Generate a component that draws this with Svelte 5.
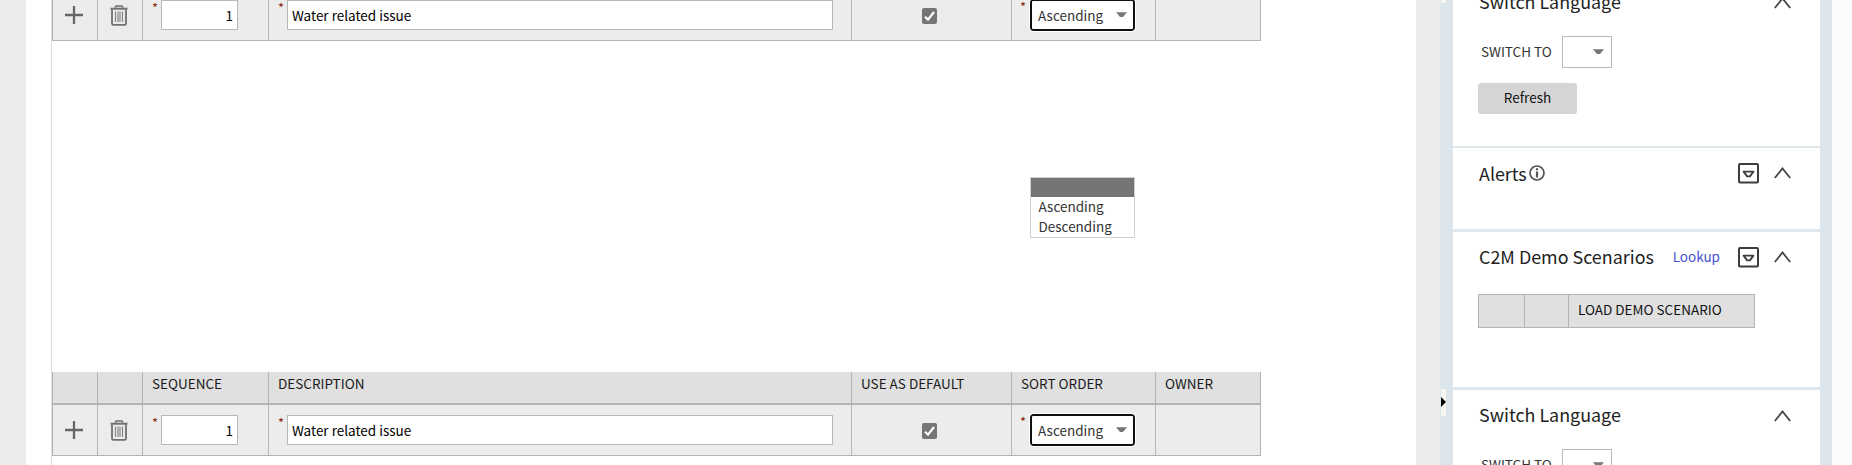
<script>
  const heads = ['', '', 'SEQUENCE', 'DESCRIPTION', 'USE AS DEFAULT', 'SORT ORDER', 'OWNER'];
</script>

{#snippet row()}
  <div class="grid row">
    <div class="icon-cell">
      <svg width="18" height="18" viewBox="0 0 18 18"><path d="M9 0V18M0 9H18" stroke="#666" stroke-width="2.3" /></svg>
    </div>
    <div class="icon-cell trash">
      <svg width="18" height="21" viewBox="0 0 18 21" fill="none" stroke="#707070">
        <path d="M5.5 2.8V1.5Q5.5 1 6.2 1H11.8Q12.5 1 12.5 1.5V2.8" stroke-width="1.4" />
        <path d="M.5 3.7H17.5" stroke-width="2" />
        <path d="M2 4.5V18.5Q2 19.8 3.3 19.8H14.7Q16 19.8 16 18.5V4.5" stroke-width="1.8" />
        <path d="M5.5 6.5V17M8 6.5V17M10 6.5V17M12.5 6.5V17" stroke-width="1.2" stroke="#858585" />
      </svg>
    </div>
    <div class="field"><span class="star">*</span><div class="input num">1</div></div>
    <div class="field"><span class="star">*</span><div class="input desc">Water related issue</div></div>
    <div class="check">
      <svg width="15" height="16" viewBox="0 0 15 16"><rect width="15" height="16" rx="2" fill="#757575" /><path d="M3 8.7L6 11.6L12 4" fill="none" stroke="#fff" stroke-width="2.2" /></svg>
    </div>
    <div class="field sort"><span class="star">*</span><div class="select"><span>Ascending</span>{@render caret()}</div></div>
    <div></div>
  </div>
{/snippet}

{#snippet caret()}
  <svg width="11" height="6" viewBox="0 0 11 6"><path d="M0 .3H11L7 5H4Z" fill="#777" /></svg>
{/snippet}

{#snippet chevron()}
  <svg width="17" height="12" viewBox="0 0 17 12"><path d="M.8 11L8.5 1.5L16.2 11" fill="none" stroke="#444" stroke-width="1.8" /></svg>
{/snippet}

{#snippet boxIcon()}
  <svg class="box" width="21" height="21" viewBox="0 0 21 21" fill="none" stroke="#3c3c3c">
    <rect x="1" y="1" width="19" height="18.6" rx="1" stroke-width="2" />
    <path d="M5.6 8.6H15.4L11.9 13.4H9.1Z" stroke-width="1.8" stroke-linejoin="round" />
  </svg>
{/snippet}

{#snippet language()}
  <section class="language">
    <header><h2>Switch Language</h2><span class="grow"></span>{@render chevron()}</header>
    <div class="switch"><span class="switch-label">SWITCH TO</span><div class="lang">{@render caret()}</div></div>
    <button>Refresh</button>
  </section>
{/snippet}

<div class="page">
  <main>
    <div class="sheet">
      <div class="first">{@render row()}</div>
      <div class="options">
        <div class="option active"></div>
        <div class="option">Ascending</div>
        <div class="option">Descending</div>
      </div>
      <div class="second">
        <div class="grid head">{#each heads as h}<div>{h}</div>{/each}</div>
        {@render row()}
      </div>
    </div>
  </main>
  <div class="gutter"></div>
  <div class="rail">
    <div class="handle short"></div>
    <div class="handle"><svg width="5" height="10" viewBox="0 0 5 10"><path d="M0 0L5 5L0 10Z" fill="#000" /></svg></div>
  </div>
  <aside>
    <div class="lift">{@render language()}</div>
    <section class="alerts">
      <header>
        <h2>Alerts</h2>
        <svg class="info" width="16" height="16" viewBox="0 0 16 16" fill="none" stroke="#555"><circle cx="8" cy="8" r="7" stroke-width="1.7" /><path d="M8 3.2V5.2M8 6.5V12.6" stroke-width="2.2" /></svg>
        <span class="grow"></span>{@render boxIcon()}{@render chevron()}
      </header>
    </section>
    <section class="demo">
      <header>
        <h2>C2M Demo Scenarios</h2><span class="grow"></span>
        <span class="link">Lookup</span>{@render boxIcon()}{@render chevron()}
      </header>
      <div class="load"><div></div><div></div><div>LOAD DEMO SCENARIO</div></div>
    </section>
    {@render language()}
  </aside>
</div>

<style>
  :global(body) { margin: 0; overflow: hidden; background: #fcfcfc; }
  .page { display: flex; width: 1852px; height: 465px; overflow: hidden; background: #fcfcfc; color: #1a1a1a; font: 13.5px/20px "Noto Sans CJK SC", "Noto Sans", sans-serif; }
  .page * { box-sizing: border-box; }
  svg { display: block; flex: none; }
  main { width: 1416px; padding-left: 26px; flex: none; background: linear-gradient(90deg, #ececec 26px, #fff 26px); }
  .sheet { margin-left: 25px; height: 465px; border-left: 1px solid #dedede; overflow: hidden; display: flex; flex-direction: column; }
  .first { margin-top: -10px; height: 51px; flex: none; }
  .second { margin-top: 134px; }
  .grid { display: grid; width: 1209px; grid-template-columns: 45px 45px 126px 583px 160px 144px 106px; border-right: 1px solid #b4b4b4; }
  .grid > div { border-left: 1px solid #b4b4b4; min-width: 0; }
  .head { height: 33px; background: #e0e0e0; border-bottom: 2px solid #b4b4b4; }
  .head > div { padding: 1px 0 0 9px; white-space: nowrap; }
  .row { height: 51px; background: #ececec; border-bottom: 1px solid #b4b4b4; }
  .icon-cell { padding: 16px 0 0 12px; }
  .icon-cell.trash { padding-top: 15px; }
  .field { display: flex; padding: 10px 0 0 9px; align-items: flex-start; }
  .star { width: 9px; font-size: 13px; line-height: 16px; color: #8b2a14; }
  .input { height: 30px; border: 1px solid #b8b8b8; background: #fff; color: #000; padding: 4px 4px 0; }
  .num { width: 77px; text-align: right; }
  .desc { width: 546px; }
  .sort { padding-top: 9px; padding-left: 8px; }
  .sort .star { width: 10px; }
  .select { display: flex; justify-content: space-between; align-items: center; width: 105px; height: 32px; border: 2px solid #101010; border-radius: 3px; outline: 1px solid #fff; background: #fff; color: #333; padding: 0 6px 0 6px; }
  .select svg { margin-top: -1px; }
  .check { padding: 18px 0 0 70px; }
  .options { width: 105px; height: 61px; margin: 136px 0 0 978px; border: 1px solid #d0d0d0; background: #fff; color: #333; flex: none; }
  .option { height: 20px; line-height: 19px; padding-left: 7.5px; }
  .active { height: 19px; background: #757575; }
  .gutter { width: 24px; background: #ececec; flex: none; }
  .rail { width: 13px; background: #dde5ec; flex: none; display: flex; flex-direction: column; justify-content: space-between; padding: 0 0 49px 1px; }
  .handle { width: 5px; height: 27px; padding-top: 8px; background: #f7f6f0; }
  .handle.short { height: 3px; padding: 0; }
  aside { width: 379px; border-right: 12px solid #dde5ec; background: #fff; flex: none; overflow: hidden; display: flex; flex-direction: column; }
  .lift { margin-top: -23px; flex: none; }
  section { padding: 0 29px 0 25px; flex: none; border-bottom: 3px solid #dde7ec; }
  header { display: flex; align-items: center; height: 24px; padding-left: 1px; }
  h2 { margin: 0; padding-bottom: 2px; font-size: 17.9px; line-height: 22px; font-weight: 400; color: #222; white-space: nowrap; }
  .alerts h2 { padding-bottom: 0; }
  .grow { flex: 1; }
  .box { margin-right: 15px; }
  .language { height: 171px; padding-top: 13px; border-bottom-width: 2px; }
  .language header svg { margin-top: 1px; }
  .switch { display: flex; align-items: center; height: 32px; margin-top: 22px; padding-left: 3px; color: #333; }
  .switch-label { width: 81px; padding-bottom: 2px; }
  .lang { width: 50px; height: 32px; border: 1px solid #b8b8b8; display: flex; align-items: center; justify-content: flex-end; padding-right: 7px; }
  button { display: block; width: 99px; height: 31px; margin-top: 15px; border: 0; border-radius: 3px; background: #d5d5d5; color: #111; font: inherit; padding: 0 0 4px; }
  .alerts { height: 84px; padding-top: 13px; }
  .info { margin-left: 2px; }
  .demo { height: 158px; padding-top: 13px; }
  .link { color: #4552d0; margin-right: 18px; padding-bottom: 2px; }
  .load { display: grid; grid-template-columns: 46px 44px 187px; width: 277px; height: 34px; margin-top: 25px; background: #e0e0e0; border: solid #b4b4b4; border-width: 1px 1px 1px 0; }
  .load > div { border-left: 1px solid #b4b4b4; padding: 4px 0 0 9px; color: #111; white-space: nowrap; }
</style>
